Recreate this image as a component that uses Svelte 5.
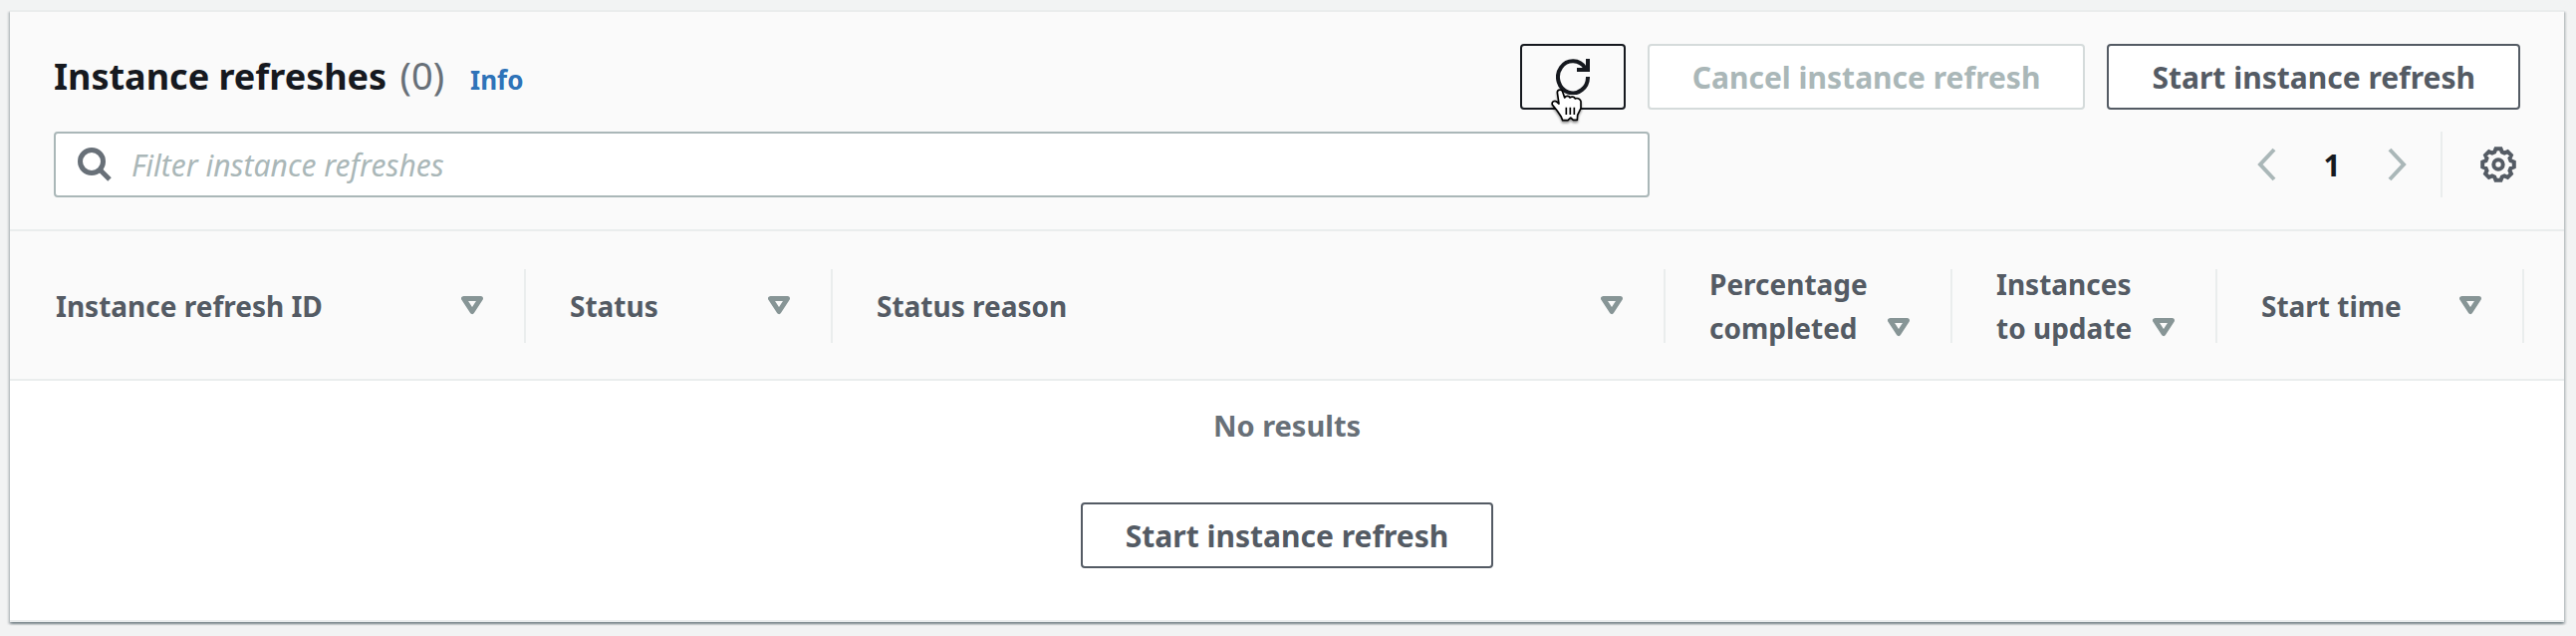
<script lang="ts">
    const columns = [
        { label: "Instance refresh ID", width: 518 },
        { label: "Status", width: 308 },
        { label: "Status reason" },
        { label: "Percentage\ncompleted", width: 288 },
        { label: "Instances\nto update", width: 266 },
        { label: "Start time", width: 348 },
    ];

    let filter = $state("");

    // eight teeth around the centre of a 36 unit box
    function gear() {
        const points: string[] = [];
        for (let i = 0; i < 8; i++) {
            for (const [offset, r] of [[-9, 16], [9, 16], [17, 13], [28, 13]]) {
                const a = ((i * 45 + offset) * Math.PI) / 180;
                points.push(`${(18 + r * Math.cos(a)).toFixed(2)} ${(18 + r * Math.sin(a)).toFixed(2)}`);
            }
        }
        return `M${points.join("L")}Z`;
    }
</script>

<section class="card" aria-labelledby="title">
    <div class="toolbar">
        <header>
            <div class="heading">
                <h2 id="title">Instance refreshes <span>(0)</span></h2>
                <a href="#info">Info</a>
            </div>
            <div class="actions">
                <button class="btn refresh" aria-label="Refresh">
                    <svg width="34" height="36" viewBox="0 0 34 36">
                        <path d="M32 18A15 16 0 1 1 29.5 9.5" />
                        <path d="M32 0V11H21" />
                    </svg>
                    <svg class="pointer" width="34" height="36" viewBox="104 146 102 108">
                        <path
                            d="M126 160C126 150 140 150 142 158L148 176C152 169 162 170 164 176C168 171 178 173 180 179C186 175 196 180 197 187V208L187 228L186 243H174L166 236L158 244H142L138 234L126 216L111 197C108 188 118 183 124 188L131 194Z"
                        />
                        <path d="M153 205V227M165 205V227M177 205V227" />
                    </svg>
                </button>
                <button class="btn" disabled>Cancel instance refresh</button>
                <button class="btn">Start instance refresh</button>
            </div>
        </header>
        <div class="tools">
            <label class="search">
                <svg width="34" height="34" viewBox="0 0 34 34">
                    <circle cx="14" cy="14" r="11.5" />
                    <path d="M22 22L32 32" />
                </svg>
                <input
                    type="text"
                    aria-label="Filter instance refreshes"
                    placeholder="Filter instance refreshes"
                    bind:value={filter}
                />
            </label>
            <div class="right">
                <nav aria-label="Pages">
                    <button class="arrow" aria-label="Previous page" disabled>
                        <svg width="19" height="34" viewBox="0 0 19 34">
                            <path d="M17 2L3 17L17 32" />
                        </svg>
                    </button>
                    <button class="page">1</button>
                    <button class="arrow" aria-label="Next page" disabled>
                        <svg width="19" height="34" viewBox="0 0 19 34">
                            <path d="M2 2L16 17L2 32" />
                        </svg>
                    </button>
                </nav>
                <div class="settings">
                    <button aria-label="Preferences">
                        <svg width="36" height="36" viewBox="0 0 36 36">
                            <path d={gear()} />
                            <circle cx="18" cy="18" r="4.7" />
                        </svg>
                    </button>
                </div>
            </div>
        </div>
    </div>

    <table>
        <colgroup>
            {#each columns as column}
                <col style:width={column.width ? `${column.width}px` : "auto"} />
            {/each}
        </colgroup>
        <thead>
            <tr>
                {#each columns as column}
                    <th scope="col">
                        <div class="cell">
                            <button class="sort">
                                <span>{column.label}</span>
                                <svg width="22" height="44" viewBox="0 0 22 44">
                                    <path d="M2.5 14.5H19.5L11 27.5Z" />
                                </svg>
                            </button>
                        </div>
                    </th>
                {/each}
            </tr>
        </thead>
        <tbody>
            <tr>
                <td colspan={columns.length}>
                    <p>No results</p>
                    <button class="btn">Start instance refresh</button>
                </td>
            </tr>
        </tbody>
    </table>
</section>

<style>
    :global(body) {
        background: #f2f3f3;
        font-family: "Noto Sans", sans-serif;
    }

    .card {
        margin: 10px 12px 14px 10px;
        background: #fff;
        border-top: 2px solid #eaeded;
        border-bottom: 2px solid #eaeded;
        box-shadow:
            0 2px 2px 0 rgba(0, 28, 36, 0.3),
            2px 2px 2px 0 rgba(0, 28, 36, 0.15),
            -2px 2px 2px 0 rgba(0, 28, 36, 0.15);
    }

    button {
        padding: 0;
        border: none;
        background: none;
        color: #545b64;
        font: inherit;
        cursor: pointer;
    }

    svg {
        display: block;
        flex-shrink: 0;
        fill: none;
        stroke: currentColor;
        stroke-width: 4;
    }

    .toolbar {
        display: flex;
        flex-direction: column;
        gap: 22px;
        padding: 32px 44px;
        background: #fafafa;
        border-bottom: 2px solid #eaeded;
    }

    header,
    .tools {
        display: flex;
        justify-content: space-between;
        align-items: center;
    }

    .heading {
        display: flex;
        align-items: baseline;
        gap: 26px;
        padding-bottom: 2px;
    }

    h2 {
        margin: 0;
        color: #16191f;
        font-size: 36px;
        line-height: 44px;
    }
    h2 span {
        margin-left: 4px;
        color: #687078;
        font-size: 38px;
        font-weight: normal;
    }

    a {
        color: #2e73b8;
        font-size: 26px;
        font-weight: bold;
        text-decoration: none;
    }

    .actions {
        display: flex;
        gap: 22px;
    }

    .btn {
        box-sizing: border-box;
        height: 66px;
        padding: 0 43px;
        border: 2px solid #545b64;
        border-radius: 4px;
        background: #fff;
        font-size: 30px;
        font-weight: bold;
        white-space: nowrap;
    }
    .btn:disabled {
        border-color: #d5dbdb;
        color: #aab7b8;
        cursor: default;
    }

    .refresh {
        position: relative;
        padding: 0 34px;
        border-color: #16191f;
        background: #fafafa;
        color: #16191f;
    }
    .pointer {
        position: absolute;
        left: 28px;
        top: 42px;
        fill: #fff;
        stroke: #000;
        stroke-width: 5;
        stroke-linejoin: round;
        filter: drop-shadow(0 2px 1px rgba(0, 0, 0, 0.4));
    }

    .search {
        box-sizing: border-box;
        display: flex;
        align-items: center;
        gap: 20px;
        width: 64.7%;
        height: 66px;
        padding: 0 22px;
        border: 2px solid #aab7b8;
        border-radius: 4px;
        background: #fff;
        color: #687078;
    }
    .search svg {
        stroke-width: 5;
    }
    input {
        flex: 1;
        min-width: 0;
        padding: 0;
        border: none;
        outline: none;
        background: none;
        color: #16191f;
        font: inherit;
        font-size: 30px;
    }
    input::placeholder {
        color: #aab7b8;
        font-style: italic;
        opacity: 1;
    }

    .right,
    nav {
        display: flex;
        align-items: center;
    }
    .right {
        gap: 34px;
    }
    .arrow {
        color: #aab7b8;
    }
    .page {
        width: 112px;
        color: #16191f;
        font-size: 30px;
        font-weight: bold;
    }

    .settings {
        display: flex;
        align-items: center;
        height: 66px;
        padding: 0 4px 0 38px;
        border-left: 2px solid #eaeded;
    }

    table {
        width: 100%;
        table-layout: fixed;
        border-collapse: collapse;
    }
    thead {
        background: #fafafa;
        border-bottom: 2px solid #eaeded;
    }
    th {
        padding: 38px 0 36px;
        font-weight: bold;
    }
    th:last-child {
        padding-right: 40px;
    }

    .cell {
        box-sizing: border-box;
        display: flex;
        align-items: center;
        height: 74px;
        padding: 0 41px 0 44px;
        border-right: 2px solid #eaeded;
    }
    th:first-child .cell {
        padding-left: 46px;
    }
    .sort {
        display: flex;
        align-items: flex-end;
        justify-content: space-between;
        width: 100%;
        color: #545b64;
        font-size: 28px;
        line-height: 44px;
        text-align: left;
        white-space: pre;
    }
    .sort svg {
        color: #879596;
        stroke-width: 5;
        stroke-linejoin: round;
    }

    td {
        padding: 23px 0 52px;
        text-align: center;
    }
    p {
        margin: 0 0 55px;
        color: #687078;
        font-size: 29px;
        font-weight: bold;
        line-height: 44px;
    }
</style>
